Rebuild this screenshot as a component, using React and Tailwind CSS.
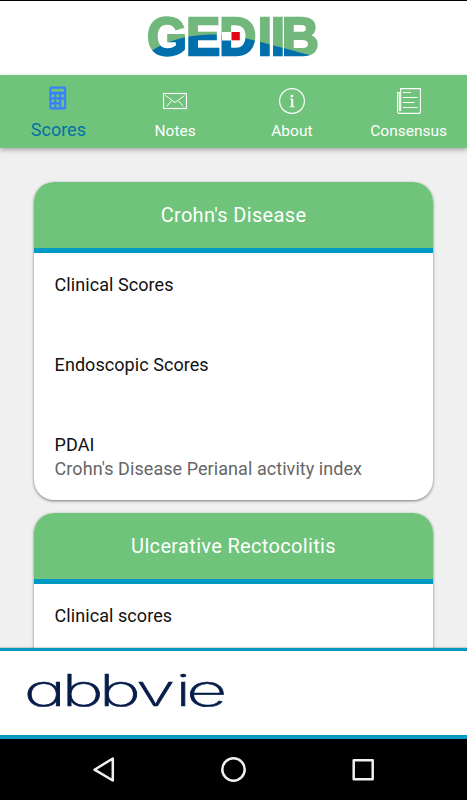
import React from 'react';

const CARDS = [
  {
    title: "Crohn's Disease",
    items: [
      { label: 'Clinical Scores' },
      { label: 'Endoscopic Scores' },
      { label: 'PDAI', detail: "Crohn's Disease Perianal activity index" },
    ],
  },
  {
    title: 'Ulcerative Rectocolitis',
    items: [{ label: 'Clinical scores' }],
  },
];

// ─── Logos ─────────────────────────────────────────────────────────
function GediibLogo() {
  return (
    <svg
      width="180"
      height="50"
      viewBox="143 11 180 50"
      className="overflow-visible"
      role="img"
      aria-label="GEDIIB"
    >
      <defs>
        {/* green letters with the blue wave running through them */}
        <pattern
          id="wave"
          patternUnits="userSpaceOnUse"
          x="140"
          y="10"
          width="190"
          height="52"
          patternTransform="scale(1.0417 1)"
        >
          <rect width="190" height="52" fill="#72b87c" />
          <path
            d="M0 52 L10 41 C26 31 45 24.500 74 24.500 C98 24.500 122 33 150 40 C164 44 172 46 180 48 L180 52 Z"
            fill="#006fac"
          />
        </pattern>
      </defs>
      <text
        transform="scale(.96 1)"
        x="152 192.800 227.300 267.500 281 292.500"
        y="55"
        fill="url(#wave)"
        stroke="url(#wave)"
        strokeWidth="2.4"
        fontFamily="Liberation Sans, sans-serif"
        fontWeight="700"
        fontSize="53.5"
      >
        GEDIIB
      </text>
      {/* notch in the D with the red square */}
      <rect x="221" y="32" width="10" height="8.500" fill="#fff" />
      <rect x="230.500" y="27" width="8" height="20" fill="#fff" />
      <rect x="230.500" y="32" width="8.300" height="8.300" fill="#e30613" />
    </svg>
  );
}

function AbbvieLogo() {
  return (
    <svg
      width="204"
      height="44"
      viewBox="24 669 204 44"
      className="overflow-visible"
      role="img"
      aria-label="abbvie"
    >
      <text
        transform="translate(24.5 706.2) scale(1.64 1)"
        x="-0.5 22.6 45.3 68 92 98.6"
        y="0"
        fill="#071d49"
        stroke="#071d49"
        strokeWidth="0.6"
        fontFamily="Inter, sans-serif"
        fontWeight="200"
        fontSize="43.5"
        style={{ fontFeatureSettings: '"cv11"' }}
      >
        abbvie
      </text>
    </svg>
  );
}

// ─── Tab icons ─────────────────────────────────────────────────────
function CalculatorIcon() {
  return (
    <svg width="18" height="24" viewBox="0 0 18 24">
      <path
        fillRule="evenodd"
        fill="#3880ff"
        d="M2 .5h13.5a1.7 1.7 0 0 1 1.7 1.7v19.6a1.7 1.7 0 0 1-1.7 1.7H2a1.7 1.7 0 0 1-1.7-1.7V2.2A1.7 1.7 0 0 1 2 .5zM2.5 2.800v3h12.600v-3zM2.500 8.500v2.700h2.900V8.500zM7.300 8.500v2.700h2.900V8.500zM12.200 8.500v2.700h2.900V8.500zM2.500 13.400v2.700h2.900v-2.700zM7.300 13.400v2.700h2.900v-2.700zM12.200 13.400v7.800h2.900v-7.800zM2.500 18.500v2.700h2.900v-2.700zM7.300 18.500v2.700h2.900v-2.700z"
      />
    </svg>
  );
}

function MailIcon() {
  return (
    <svg width="24" height="26" viewBox="0 0 24 26" fill="none" stroke="#fff">
      <rect x=".5" y="5.500" width="23" height="15" strokeWidth="1.200" />
      <path d="M2.500 7.500l9.500 7 9.500-7M3.700 18.300l5-5.500M20.300 18.300l-5-5.500" strokeWidth="1" />
    </svg>
  );
}

function InfoIcon() {
  return (
    <svg width="26" height="26" viewBox="0 0 26 26">
      <circle cx="13" cy="13" r="12.400" fill="none" stroke="#fff" strokeWidth="1.200" />
      <circle cx="12.900" cy="8" r="1.500" fill="#fff" />
      <path d="M11 11.300h1.900" fill="none" stroke="#fff" strokeWidth="1" />
      <path d="M13.200 10.800v7.500" fill="none" stroke="#fff" strokeWidth="2" />
      <path d="M10.800 18.700h4.800" fill="none" stroke="#fff" strokeWidth="1" />
    </svg>
  );
}

function PaperIcon() {
  return (
    <svg width="24" height="26" viewBox="0 0 24 26" fill="none" stroke="#fff" strokeWidth="1.100">
      <path d="M3.700 22V.6h19.700v22.800q0 2-2 2H2.200q-1.700 0-1.700-2V4.500h1.800v17.500q0 .8.700.8.700 0 .7-.8z" />
      <path d="M6 4.500h8M6 9.500h14.500M6 14.500h11.500M6 19.500h14.500" />
    </svg>
  );
}

const TABS = [
  { label: 'Scores', Icon: CalculatorIcon, active: true },
  { label: 'Notes', Icon: MailIcon },
  { label: 'About', Icon: InfoIcon },
  { label: 'Consensus', Icon: PaperIcon },
];

function Tab({ label, Icon, active }) {
  return (
    <button
      className={`flex flex-1 flex-col items-center ${
        active ? 'pt-[11px] text-[18px] text-[#0072a8]' : 'pt-[13px] text-[15.5px] text-white'
      }`}
    >
      <Icon />
      <span className={active ? 'mt-[8px] leading-6' : 'mt-[5px] leading-6'}>{label}</span>
    </button>
  );
}

function ScoreCard({ title, items }) {
  return (
    <section className="shrink-0 overflow-hidden rounded-[20px] bg-white shadow-[0_1px_3px_rgba(0,0,0,0.5)]">
      <h2 className="flex h-[71px] items-center justify-center border-b-[5px] border-[#0099c3] bg-[#6fc37a] text-[20px] tracking-[0.33px] text-white">
        {title}
      </h2>
      <ul className="h-[247px] px-[20.6px] pt-[20px] text-[18px] leading-[23px] tracking-[0.06px] text-[#111]">
        {items.map((item) => (
          <li key={item.label} className="h-[80px]">
            <p>{item.label}</p>
            {item.detail && <p className="mt-px text-[#666]">{item.detail}</p>}
          </li>
        ))}
      </ul>
    </section>
  );
}

export default function App() {
  return (
    <div className="flex h-[800px] w-[467px] flex-col overflow-hidden bg-[#f0f0f0] font-['Roboto',sans-serif]">
      <header className="flex h-[75px] shrink-0 justify-center border-t border-black bg-white pt-[10px]">
        <GediibLogo />
      </header>

      <nav className="z-10 flex h-[73px] shrink-0 bg-[#6fc37a] shadow-[0_2px_5px_rgba(0,0,0,0.3)]">
        {TABS.map((tab) => (
          <Tab key={tab.label} {...tab} />
        ))}
      </nav>

      <main className="flex min-h-0 flex-1 flex-col gap-[13px] overflow-hidden px-[34px] pt-[34px]">
        {CARDS.map((card) => (
          <ScoreCard key={card.title} {...card} />
        ))}
      </main>

      <footer className="h-[91px] shrink-0 border-t-[3px] border-b-[4px] border-[#0099c3] bg-white pt-[18px] pl-[24px] shadow-[0_-1px_1px_rgba(0,0,0,0.15)]">
        <AbbvieLogo />
      </footer>

      {/* Android navigation bar */}
      <div className="h-[61px] shrink-0 bg-black">
        <svg width="467" height="61" viewBox="0 739 467 61" fill="none" stroke="#f0f0f0" strokeWidth="2.500">
          <path d="M94.500 769.700L112.800 758.500V780.500Z" strokeLinejoin="round" />
          <circle cx="233.500" cy="769.500" r="11.200" />
          <rect x="353.700" y="760.200" width="19" height="19" strokeLinejoin="round" />
        </svg>
      </div>
    </div>
  );
}
